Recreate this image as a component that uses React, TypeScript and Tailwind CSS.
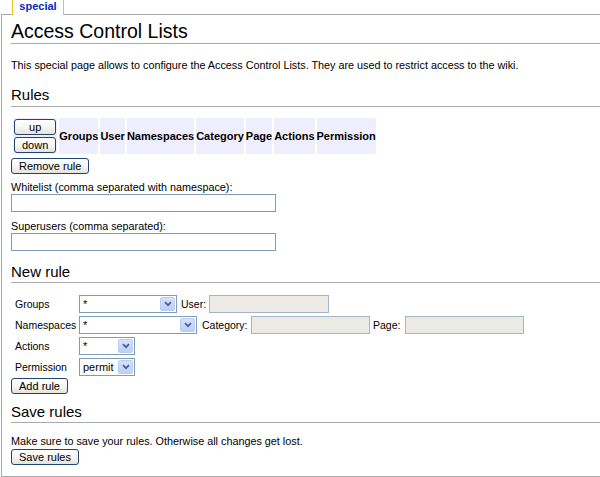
import React from "react";

const Btn = ({children}: {children: React.ReactNode}) => (
    <button className="block h-[16px] px-[7px] text-[11px] leading-[14px] text-black border border-[#21456e] rounded-[3px] bg-gradient-to-b from-white via-[#f6f6f3] to-[#e4e3dc]">
        {children}
    </button>
);

const Chevron = () => (
    <svg width="8" height="6" viewBox="0 0 8 6">
        <path d="M1 1.2 L4 4.2 L7 1.2" fill="none" stroke="#4a5f8a" strokeWidth="1.7"/>
    </svg>
);

const Select = ({value, width}: {value: string; width: string}) => (
    <div className={`flex h-[18px] items-center border border-[#7f9db9] bg-white ${width}`}>
        <span className="flex-1 pl-[3px] text-[11px] leading-[14px]">{value}</span>
        <div className="mr-px flex h-[14px] w-[15px] items-center justify-center rounded-[2px] border border-[#b9cdf5] bg-gradient-to-b from-[#d6e2fc] to-[#bccffa]">
            <Chevron/>
        </div>
    </div>
);

const Disabled = ({width}: {width: string}) => (
    <input disabled className={`block h-[18px] shrink-0 border border-[#a5b5c9] bg-[#ebeae4] ${width}`}/>
);

const App = () => {
    return (
        <div className="h-[477px] w-[600px] overflow-hidden bg-white text-black font-['Liberation_Sans',Arial,sans-serif]">
            <div className="relative z-10 -mb-px ml-[12px] h-[15px] w-[52px] border-x border-[#fabd23] bg-white text-center text-[11px] font-bold leading-[13px] text-[#002bb8]">
                special
            </div>
            <section className="ml-px h-[463px] border-y border-l border-[#aaaaaa] pl-[9px]">
                <h1 className="mt-[5px] border-b border-[#aaaaaa] pb-px text-[19.5px] leading-[22px]">
                    Access Control Lists
                </h1>
                <p className="mt-[14px] text-[10.8px] leading-[14px]">
                    This special page allows to configure the Access Control Lists. They are used to restrict access to the wiki.
                </p>

                <h2 className="mt-[14px] border-b border-[#aaaaaa] pb-[2px] text-[15px] leading-[18px]">Rules</h2>
                <table className="mt-[9px] border-separate border-spacing-[2px] text-[11px]">
                    <tbody>
                        <tr className="bg-[#eeeeff]">
                            <td className="p-px">
                                <div className="flex flex-col gap-[2px]">
                                    <Btn>up</Btn>
                                    <Btn>down</Btn>
                                </div>
                            </td>
                            <th className="p-0 font-bold">Groups</th>
                            <th className="p-0 font-bold">User</th>
                            <th className="p-0 font-bold">Namespaces</th>
                            <th className="p-0 font-bold">Category</th>
                            <th className="p-0 font-bold">Page</th>
                            <th className="p-0 font-bold">Actions</th>
                            <th className="p-0 font-bold">Permission</th>
                        </tr>
                    </tbody>
                </table>
                <div className="mt-[2px]">
                    <Btn>Remove rule</Btn>
                </div>
                <div className="mt-[6px] text-[10.8px] leading-[14px]">Whitelist (comma separated with namespace):</div>
                <input className="block h-[18px] w-[265px] border border-[#7f9db9] bg-white"/>
                <div className="mt-[7px] text-[10.8px] leading-[14px]">Superusers (comma separated):</div>
                <input className="block h-[18px] w-[265px] border border-[#7f9db9] bg-white"/>

                <h2 className="mt-[12px] border-b border-[#aaaaaa] pb-px text-[15px] leading-[18px]">New rule</h2>
                <div className="mt-[12px] flex flex-col gap-[3px] text-[10.5px] leading-[14px]">
                    <div className="flex h-[18px] items-center">
                        <span className="w-[68px] shrink-0 pl-[4px]">Groups</span>
                        <Select value="*" width="w-[98px]"/>
                        <span className="w-[32px] pl-[4px]">User:</span>
                        <Disabled width="w-[120px]"/>
                    </div>
                    <div className="flex h-[18px] items-center">
                        <span className="w-[68px] shrink-0 pl-[4px]">Namespaces</span>
                        <Select value="*" width="w-[118px]"/>
                        <span className="w-[54px] pl-[5px]">Category:</span>
                        <Disabled width="w-[119px]"/>
                        <span className="w-[35px] pl-[3px]">Page:</span>
                        <Disabled width="w-[119px]"/>
                    </div>
                    <div className="flex h-[18px] items-center">
                        <span className="w-[68px] shrink-0 pl-[4px]">Actions</span>
                        <Select value="*" width="w-[56px]"/>
                    </div>
                    <div className="flex h-[18px] items-center">
                        <span className="w-[68px] shrink-0 pl-[4px]">Permission</span>
                        <Select value="permit" width="w-[56px]"/>
                    </div>
                </div>
                <div className="mt-[2px]">
                    <Btn>Add rule</Btn>
                </div>

                <h2 className="mt-[9px] border-b border-[#aaaaaa] pb-px text-[15px] leading-[18px]">Save rules</h2>
                <p className="mt-[11px] text-[10.8px] leading-[14px]">
                    Make sure to save your rules. Otherwise all changes get lost.
                </p>
                <div className="mt-px">
                    <Btn>Save rules</Btn>
                </div>
            </section>
        </div>
    );
};

export default App;
